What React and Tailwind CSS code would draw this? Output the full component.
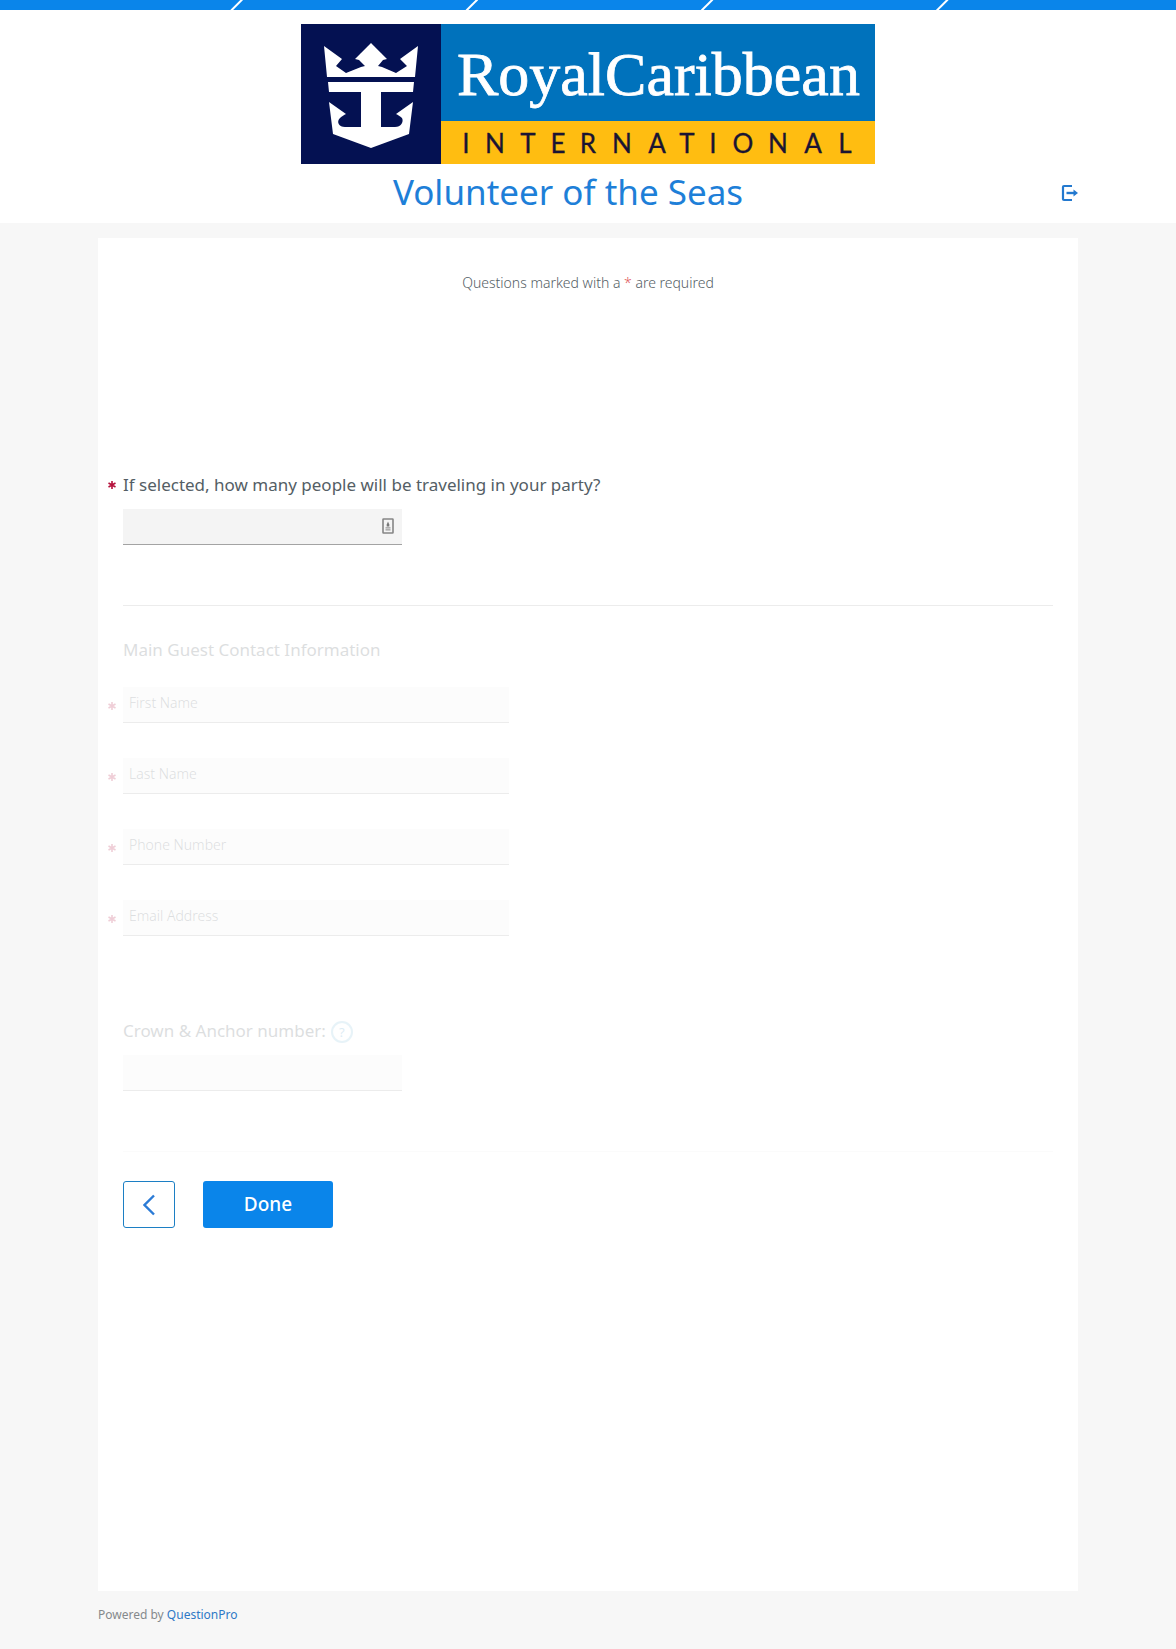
import React from "react";

const INTERNATIONAL_X = "466 495 528 558 588 622 657 687 713 743 778 813 845";

function RoyalLogo() {
  return (
    <svg viewBox="0 0 574 140" className="block w-full max-w-[574px]" role="img" aria-label="Royal Caribbean International">
      <rect width="140" height="140" fill="#041152" />
      <rect x="140" width="434" height="97" fill="#0072bc" />
      <rect x="140" y="97" width="434" height="43" fill="#ffbd11" />
      <g fill="#fff">
        <path d="M23 22 L41 35 L35 42 L45 49 L60 43 L64 42 L58 36 L54 35 L60 29 L70 19 L80 29 L86 35 L82 36 L77 42 L81 43 L95 49 L106 42 L99 35 L117 22 L114 53 H26 Z" />
        <path d="M27 58 H113 L112 68 H80 V103 H94 C100 103 103 98 101 94 C99 92 97 91 95 90 L112 78 L108 110 L70 124 L32 110 L28 78 L45 90 C43 91 41 92 39 94 C35 98 38 103 44 103 H60 V68 H28 Z" />
      </g>
      <text x="156" y="71" fill="#fff" stroke="#fff" strokeWidth="0.8" fontSize="62" fontFamily="'Liberation Serif', serif">RoyalCaribbean</text>
      <g transform="translate(-301 0)">
        <text x={INTERNATIONAL_X} y="129" textAnchor="middle" fill="#1a1433" stroke="#1a1433" strokeWidth="0.3" fontSize="26" fontFamily="Lato, sans-serif">INTERNATIONAL</text>
      </g>
    </svg>
  );
}

function Asterisk({ className }) {
  return (
    <svg viewBox="0 0 10 10" className={className} aria-hidden="true">
      <path d="M5 1 V9 M1.5 3 L8.5 7 M8.5 3 L1.5 7" stroke="#b5123c" strokeWidth="1.6" fill="none" />
    </svg>
  );
}

const fields = [
  { id: "first", label: "First Name", type: "text" },
  { id: "last", label: "Last Name", type: "text" },
  { id: "phone", label: "Phone Number", type: "tel" },
  { id: "email", label: "Email Address", type: "email" },
];

export default function App() {
  return (
    <div className="flex min-h-screen flex-col bg-[#f7f7f7] font-['Noto_Sans',sans-serif] text-[#545e65]">
      <svg className="block h-[10px] w-full bg-[#0a85ea]" aria-hidden="true">
        {["20%", "40%", "60%", "80%"].map((x) => (
          <svg key={x} x={x} width="12" height="10" overflow="visible">
            <path d="M-4 10.5 L7 -0.5" stroke="#fff" strokeWidth="2" />
          </svg>
        ))}
      </svg>

      <header className="bg-white pt-[14px]">
        <div className="flex justify-center">
          <RoyalLogo />
        </div>
        <div className="mx-auto flex h-[59px] w-5/6 items-start">
          <h1 className="flex-1 text-center text-[35px] leading-[56px] text-[#1e7fd8]">Volunteer of the Seas</h1>
          <div className="flex h-[58px] w-[40px] items-center justify-end">
            <button type="button" aria-label="Exit survey" className="text-[#2379cf]">
              <svg viewBox="0 0 18 18" className="block h-[18px] w-[18px]" fill="none" stroke="currentColor" strokeWidth="2.2">
                <path d="M12 2 H4 Q3 2 3 3 V15 Q3 16 4 16 H12" />
                <path d="M6.5 9 H15" strokeWidth="2.4" />
                <path d="M13.5 5.5 L18 9 L13.5 12.5 Z" fill="currentColor" stroke="none" />
              </svg>
            </button>
          </div>
        </div>
      </header>

      <main className="mx-auto mt-[15px] w-5/6 flex-1 bg-white px-[25px]">
        <p className="pt-[35px] text-center text-[14px] font-light leading-[20px] text-[#545e65]">
          Questions marked with a <span className="text-[#e0565b]">*</span> are required
        </p>

        <form onSubmit={(e) => e.preventDefault()}>
          <section className="pt-[179px]">
            <div className="-ml-[16px] flex items-center">
              <Asterisk className="mr-[6px] h-[10px] w-[10px]" />
              <label htmlFor="party" className="text-[17px] leading-[26px]">
                If selected, how many people will be traveling in your party?
              </label>
            </div>
            <div className="mt-[11px] flex h-[36px] w-[279px] items-center border-b border-[#a3a3a3] bg-[#f4f4f4] pr-[8px]">
              <input id="party" type="text" className="h-full min-w-0 flex-1 bg-transparent px-[7px] text-[14px] outline-none" />
              <svg viewBox="0 0 12 16" className="mb-[2px] h-[16px] w-[12px]" aria-hidden="true">
                <rect x="1" y="1" width="10" height="14" rx="0.5" fill="#f4f4f4" stroke="#858585" strokeWidth="1.6" />
                <path d="M6 3.5 L7.3 6.5 V8.5 H4.7 V6.5 Z" fill="#777" />
                <path d="M3.5 9.8 H8.5 M3.5 11.8 H8.5" stroke="#999" strokeWidth="1.2" />
              </svg>
            </div>
            <hr className="mt-[60px] border-[#ececec]" />
          </section>

          <div className="opacity-20">
            <fieldset className="pt-[31px]">
              <legend className="float-left w-full text-[17px] leading-[26px]">Main Guest Contact Information</legend>
              <div className="clear-both flex flex-col gap-[35px] pt-[24px]">
                {fields.map((f) => (
                  <div key={f.id} className="-ml-[16px] flex items-center">
                    <Asterisk className="mr-[6px] mt-[2px] h-[10px] w-[10px]" />
                    <input
                      id={f.id}
                      type={f.type}
                      placeholder={f.label}
                      aria-label={f.label}
                      className="h-[36px] w-[386px] border-b border-[#a3a3a3] bg-[#f4f4f4] px-[6px] pb-[4px] text-[14px] font-light outline-none placeholder:text-[#545e65]"
                    />
                  </div>
                ))}
              </div>
            </fieldset>

            <div className="mt-[82px] flex items-center gap-[5px]">
              <label htmlFor="crown" className="text-[17px] leading-[26px]">Crown &amp; Anchor number:</label>
              <button type="button" aria-label="Help" className="mt-[2px] h-[22px] w-[22px] rounded-full border-2 border-[#8cc4e0] text-[13px] leading-[18px] text-[#5ba3cc]">?</button>
            </div>
            <input id="crown" type="text" className="mt-[11px] block h-[36px] w-[279px] border-b border-[#a3a3a3] bg-[#f4f4f4] px-[7px] text-[14px] outline-none" />
            <hr className="mt-[60px] border-[#ececec]" />
          </div>

          <div className="mt-[29px] flex gap-[28px]">
            <button type="button" aria-label="Back" className="flex h-[47px] w-[52px] items-center justify-center rounded-[3px] border border-[#1c7fc4] text-[#2b7bd6]">
              <svg viewBox="0 0 12 22" className="h-[22px] w-[12px]" fill="none" stroke="currentColor" strokeWidth="2.4">
                <path d="M11 1.5 L1.5 11 L11 20.5" />
              </svg>
            </button>
            <button type="submit" className="h-[47px] w-[130px] rounded-[3px] bg-[#0a85ea] text-[19px] font-medium text-white">Done</button>
          </div>
        </form>
      </main>

      <footer className="mx-auto h-[58px] w-5/6 pt-[14px] text-[12px] leading-[20px] text-[#85898c]">
        Powered by <a href="#questionpro" className="text-[#2f79c6]">QuestionPro</a>
      </footer>
    </div>
  );
}
